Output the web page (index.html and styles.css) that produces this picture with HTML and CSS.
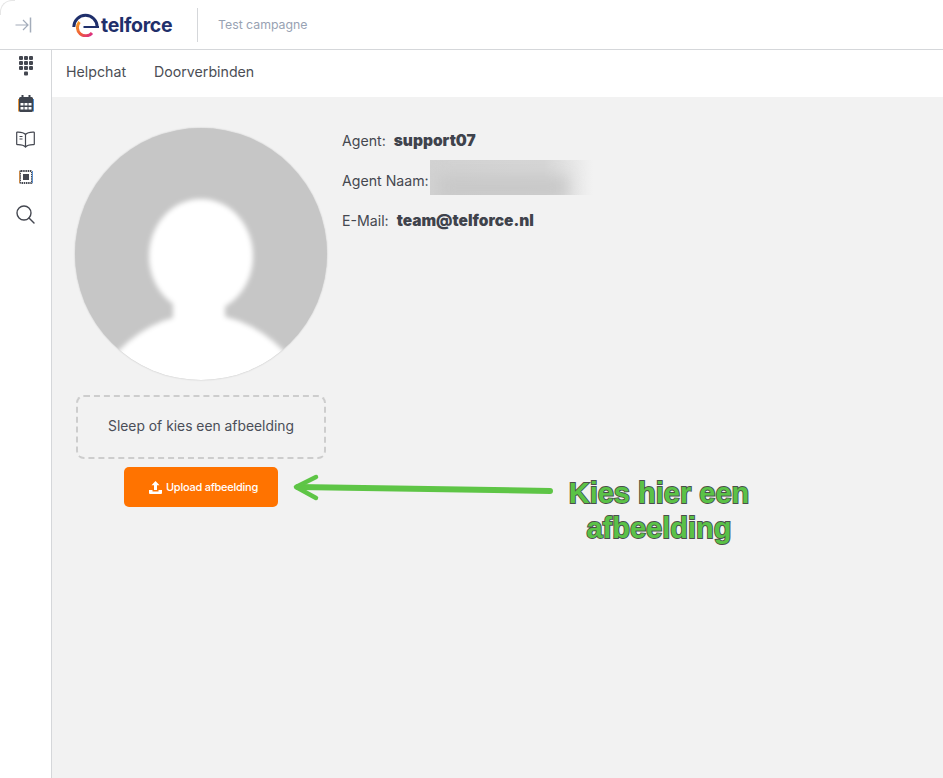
FILE: index.html
```html
<!DOCTYPE html>
<html lang="nl">
<head>
<meta charset="utf-8">
<title>Telforce</title>
<link rel="stylesheet" href="styles.css">
</head>
<body>
<header class="topbar">
  <div class="toggle">
    <svg width="18" height="16" viewBox="0 0 18 16" fill="none" stroke="#a3acba" stroke-width="1.200"><path d="M0.500 8H13M8 3l5 5-5 5"/><path d="M15.500 .5v15" stroke-width="1.500"/></svg>
  </div>
  <div class="brand">
    <svg class="logo" width="28" height="24" viewBox="0 0 28 24" fill="none">
      <defs><linearGradient id="lg" x1="0" y1="0" x2="1" y2="1"><stop offset="0" stop-color="#f59a23"/><stop offset=".55" stop-color="#ef5a3c"/><stop offset="1" stop-color="#d92b8a"/></linearGradient></defs>
      <path d="M1.800 14A11.700 11.700 0 0 1 25.200 14" stroke="#1f2f6b" stroke-width="3"/>
      <path d="M7.500 9A8 8 0 1 0 20 20" stroke="url(#lg)" stroke-width="3"/>
      <path d="M11.500 14H27" stroke="#1f2f6b" stroke-width="2"/>
    </svg>
    <span class="brand-name">telforce</span>
  </div>
  <div class="campaign">Test campagne</div>
</header>
<div class="body">
  <nav class="sidebar">
    <svg width="16" height="20" viewBox="0 0 16 20" fill="#444750"><rect x="1" y="0" width="4" height="4" rx="1"/><rect x="6" y="0" width="4" height="4" rx="1"/><rect x="11" y="0" width="4" height="4" rx="1"/><rect x="1" y="5" width="4" height="4" rx="1"/><rect x="6" y="5" width="4" height="4" rx="1"/><rect x="11" y="5" width="4" height="4" rx="1"/><rect x="1" y="10" width="4" height="4" rx="1"/><rect x="6" y="10" width="4" height="4" rx="1"/><rect x="11" y="10" width="4" height="4" rx="1"/><rect x="6" y="15.500" width="4" height="4" rx="1"/></svg>
    <svg width="16" height="17" viewBox="0 0 16 17"><path d="M.5 4v12.500" stroke="#e8963c" fill="none"/><path d="M15.500 4v12.500" stroke="#4a90d9" fill="none"/><path fill="#3f444e" fill-rule="evenodd" d="M3.500 0h2v2h5V0h2v2h1A1.500 1.500 0 0 1 15 3.500v12a1.500 1.500 0 0 1-1.500 1.500h-11A1.500 1.500 0 0 1 1 15.500v-12A1.500 1.500 0 0 1 2.500 2h1zM2.500 8v2.500h3V8zm4 0v2.500h3V8zm4 0v2.500h3V8zM2.500 12v2.500h3V12zm4 0v2.500h3V12zm4 0v2.500h3V12z"/></svg>
    <svg width="19" height="18" viewBox="0 0 19 18" fill="none" stroke="#444750" stroke-width="1.200"><path d="M9.500 3.500C8 1.800 5 1 1 1.200.8 1.200.7 1.400.7 1.600V13c0 .4.300.6.700.6 3.600-.1 6.500.5 8.100 2.400 1.600-1.900 4.500-2.500 8.100-2.400.4 0 .7-.2.700-.6V1.600c0-.2-.1-.4-.3-.4C14 1 11 1.800 9.500 3.500zM9.500 3.500V16"/><path d="M3.500 5.500h3M3.500 8h3"/></svg>
    <svg width="14" height="14" viewBox="0 0 14 14" fill="none"><rect x="1" y="1" width="12" height="12" rx="1" stroke="#444750" stroke-width="2" stroke-dasharray="1.500 .7"/><path d="M.5 1v12" stroke="#c98a4a"/><path d="M13.500 1v12" stroke="#5a8fcf"/><rect x="4" y="4" width="6" height="6" fill="#444750"/></svg>
    <svg width="19" height="19" viewBox="0 0 19 19" fill="none" stroke="#444750" stroke-width="1.400"><circle cx="8" cy="8" r="7"/><path d="M13 13l5 5" stroke-linecap="round"/></svg>
  </nav>
  <div class="content">
    <div class="tabs">
      <span class="tab">Helpchat</span>
      <span class="tab">Doorverbinden</span>
    </div>
    <main class="profile">
      <section class="photo-col">
        <div class="avatar">
          <svg width="252" height="252" viewBox="0 0 252 252">
            <defs><filter id="soft" x="-10%" y="-10%" width="120%" height="120%"><feGaussianBlur stdDeviation="2.500"/></filter></defs>
            <g fill="#fff" filter="url(#soft)">
              <ellipse cx="126" cy="128" rx="52" ry="57"/>
              <rect x="98" y="165" width="52" height="30"/>
              <ellipse cx="126" cy="347" rx="130" ry="161"/>
            </g>
          </svg>
        </div>
        <div class="dropzone">Sleep of kies een afbeelding</div>
        <button class="upload" type="button">
          <svg width="13" height="13" viewBox="0 0 13 13" fill="#fff"><path d="M6.500 0 10.500 4.300H8V9H5V4.300H2.500z"/><path d="M0 9h3.500v1.500h6V9H13v3a1 1 0 0 1-1 1H1a1 1 0 0 1-1-1z"/></svg>
          Upload afbeelding
        </button>
      </section>
      <section class="info">
        <div class="info-row">Agent: <b class="value">support07</b></div>
        <div class="info-row name-row">Agent Naam:<span class="redacted"><span class="smear"></span></span></div>
        <div class="info-row">E-Mail: <b class="value mail">team@telforce.nl</b></div>
      </section>
    </main>
  </div>
</div>
<svg class="arrow" width="266" height="32" viewBox="0 0 266 32" fill="none" stroke="#5ec546" stroke-linecap="round" stroke-linejoin="round"><path d="M260 19 8 15" stroke-width="6"/><path d="M26 5 6 15l20 11" stroke-width="4.500"/></svg>
<div class="note">Kies hier een<br>afbeelding</div>
</body>
</html>
```
FILE: styles.css
```css
* { box-sizing: border-box; }
html, body { height: 100%; }
body {
  margin: 0;
  height: 778px;
  overflow: hidden;
  position: relative;
  background: #fff;
  font-family: Inter, "Noto Sans", sans-serif;
  color: #454850;
  display: flex;
  flex-direction: column;
}
body::before {
  content: "";
  position: absolute;
  left: 0;
  top: 0;
  width: 14px;
  height: 14px;
  border-top: 1px solid #e6e6e6;
  border-left: 1px solid #e6e6e6;
  border-top-left-radius: 12px;
}
.topbar {
  height: 50px;
  flex: none;
  display: flex;
  align-items: center;
  border-bottom: 1px solid #d5d7da;
  padding-left: 15px;
}
.toggle { width: 18px; height: 16px; display: flex; }
.brand { display: flex; align-items: center; margin-left: 39px; width: 125px; }
.logo { flex: none; margin-top: 0; }
.brand-name {
  font-size: 19.500px;
  font-weight: 700;
  color: #1f2f6b;
  letter-spacing: -0.300px;
  margin-left: 1px;
}
.campaign {
  height: 34px;
  border-left: 1px solid #d5d7da;
  padding-left: 20px;
  line-height: 34px;
  font-size: 12.300px;
  color: #98a2b3;
}
.body { flex: 1; display: flex; min-height: 0; }
.sidebar {
  width: 52px;
  flex: none;
  border-right: 1px solid #d5d7da;
  display: flex;
  flex-direction: column;
  align-items: center;
  padding-top: 6px;
}
.sidebar svg:nth-child(2) { margin-top: 19px; }
.sidebar svg:nth-child(3) { margin-top: 19px; }
.sidebar svg:nth-child(4) { margin-top: 21px; }
.sidebar svg:nth-child(5) { margin-top: 21px; }
.content { flex: 1; display: flex; flex-direction: column; min-width: 0; }
.tabs {
  height: 47px;
  flex: none;
  display: flex;
  align-items: center;
  gap: 28px;
  padding: 0 0 4px 14px;
  font-size: 14.200px;
  color: #4b4e55;
}
.profile {
  flex: 1;
  background: #f2f2f2;
  display: flex;
  padding: 31px 0 0 23px;
}
.photo-col { width: 252px; flex: none; display: flex; flex-direction: column; align-items: center; }
.avatar {
  width: 252px;
  height: 252px;
  border-radius: 50%;
  overflow: hidden;
  background: #c6c6c6;
  box-shadow: 0 0 2px rgba(0,0,0,.2);
}
.avatar svg { display: block; }
.dropzone {
  width: 250px;
  height: 64px;
  margin-top: 15px;
  padding-bottom: 2px;
  border: 2px dashed #cdcdcd;
  border-radius: 8px;
  display: flex;
  align-items: center;
  justify-content: center;
  font-size: 13.850px;
  color: #4a4e58;
}
.upload {
  width: 154px;
  height: 40px;
  margin-top: 8px;
  padding: 0 0 0 5px;
  border: 0;
  border-radius: 5px;
  background: #ff7300;
  color: #fff;
  font-family: inherit;
  font-size: 11px;
  font-weight: 500;
  letter-spacing: -0.250px;
  display: flex;
  align-items: center;
  justify-content: center;
  gap: 4px;
}
.info { margin-left: 15px; padding-top: 3px; font-size: 14.150px; }
.info-row { height: 40px; line-height: 20px; display: flex; align-items: flex-start; white-space: pre; }
.value { font-weight: 900; color: #3f434c; margin-left: 4px; font-size: 15.500px; }
.name-row { position: relative; }
.redacted {
  width: 163px;
  height: 35px;
  margin: -11px 0 0 1px;
  overflow: hidden;
  display: block;
  background: linear-gradient(90deg, #d2d2d2 0, #d6d6d6 70%, #f2f2f2 100%);
}
.smear {
  display: block;
  width: 130px;
  height: 24px;
  margin: 16px 0 0 8px;
  background: #c8c8c8;
  filter: blur(8px);
}
.arrow { position: absolute; left: 290px; top: 472px; }
.note {
  position: absolute;
  left: 540px;
  top: 476px;
  width: 238px;
  text-align: center;
  font-family: "Liberation Sans", Arial, sans-serif;
  font-weight: 700;
  font-size: 29px;
  line-height: 35px;
  color: #5ac247;
  -webkit-text-stroke: 1.800px #4a4f4a;
  paint-order: stroke fill;
}
```
